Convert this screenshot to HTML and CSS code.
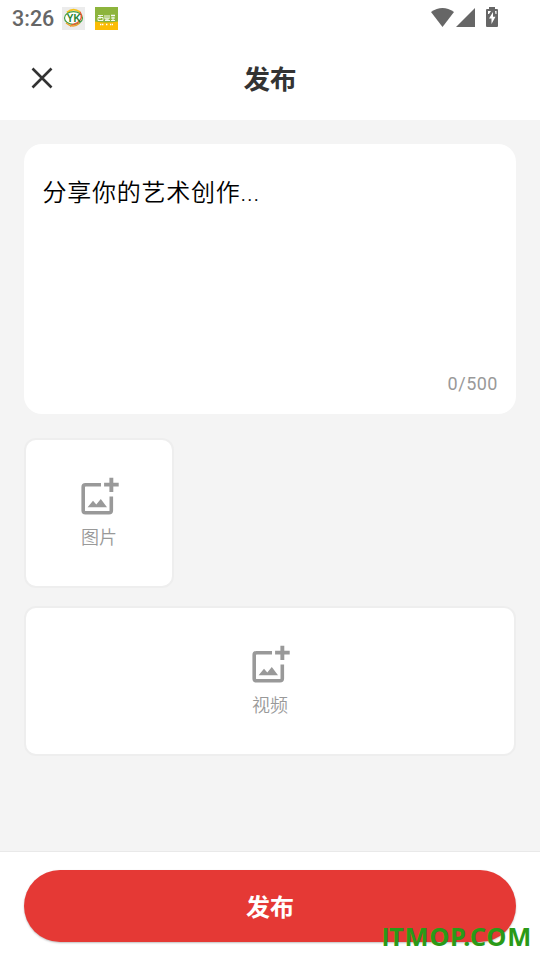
FILE: index.html
```html
<!DOCTYPE html>
<html lang="zh-CN">
<head>
<meta charset="utf-8">
<title>发布</title>
<link rel="stylesheet" href="styles.css">
</head>
<body>
<div class="screen">
  <div class="status">
    <span class="clock">3:26</span>
    <svg class="app-yk" width="23" height="23" viewBox="0 0 23 23">
      <rect width="23" height="23" fill="#ececec"/>
      <path d="M5 5.500Q11 0 18 5" fill="none" stroke="#f5c21b" stroke-width="1.8"/>
      <ellipse cx="11.500" cy="11" rx="9" ry="6.400" fill="#fff" stroke="#46a044" stroke-width="1.200"/>
      <path d="M18 5Q22 11 15 16L8 19" fill="none" stroke="#e65a32" stroke-width="1.400"/>
      <path d="M4 16Q11 22 18 16" fill="none" stroke="#eda12c" stroke-width="1.300"/>
      <text x="4.800" y="15" class="yk-text">YK</text>
    </svg>
    <svg class="app-green" width="23" height="23" viewBox="0 0 23 23">
      <rect width="23" height="23" fill="#8db43c"/>
      <path d="M0 14.500Q11 16.500 23 14.500V23H0Z" fill="#fbbc05"/>
      <path d="M3 8.500h5M3 10.500h5v3H3zM5 8v4M10 8v4h4V8M12 8v5M10 13.500h5M16 8.500h4M17 7.500v2M19 7.500v2M16 11h4M18 10v4M16 13.500h4" fill="none" stroke="#fff" stroke-width=".9"/>
      <path d="M5 17.500h4M11 17.500h2M15 17.500h3" stroke="#fff" stroke-width="1.600" stroke-dasharray="1.400 .6"/>
    </svg>
    <svg class="signals" width="68" height="22" viewBox="0 0 68 22" fill="#666">
      <path d="M0 5Q11.500 -3 23 5L11.500 20Z"/>
      <path d="M44 1V20H25Z"/>
      <path d="M58 0h6v2h2a1 1 0 0 1 1 1v16a1 1 0 0 1-1 1H56a1 1 0 0 1-1-1V3a1 1 0 0 1 1-1h2z"/>
      <path d="M62 5L58 11.500H60.500V17L64.500 9.800H62Z" fill="#fff"/>
      <path d="M57 4h3l-2 3h-1zM64 4H65.500v3h-1z" fill="#fff"/>
    </svg>
  </div>
  <header class="header">
    <svg class="close" width="24" height="24" viewBox="0 0 24 24"><path d="M2.500 2.500L21.500 21.500M21.500 2.500L2.500 21.500" stroke="#333" stroke-width="2.600"/></svg>
    <h1 class="title">发布</h1>
  </header>
  <main class="content">
    <section class="editor">
      <p class="placeholder">分享你的艺术创作...</p>
      <span class="count">0/500</span>
    </section>
    <div class="tile tile-image">
      <svg class="add-icon" width="38" height="38" viewBox="0 0 38 38"><path d="M20 7.800H4.500Q2.200 7.800 2.200 10V33.500Q2.200 35.800 4.500 35.800H28Q30.300 35.800 30.300 33.500V19.500" fill="none" stroke="#999" stroke-width="3.600"/><path d="M28.400 .7h3.900v5h5.400v3.900h-5.400v5.300h-3.900V9.600h-5.300V5.700h5.300z M6.600 30.200L12 23.800L15.300 27.600L19.800 22L26 30.200Z" fill="#999"/></svg>
      <span class="label">图片</span>
    </div>
    <div class="tile">
      <svg class="add-icon" width="38" height="38" viewBox="0 0 38 38"><path d="M20 7.800H4.500Q2.200 7.800 2.200 10V33.500Q2.200 35.800 4.500 35.800H28Q30.300 35.800 30.300 33.500V19.500" fill="none" stroke="#999" stroke-width="3.600"/><path d="M28.400 .7h3.900v5h5.400v3.900h-5.400v5.300h-3.900V9.600h-5.300V5.700h5.300z M6.600 30.200L12 23.800L15.300 27.600L19.800 22L26 30.200Z" fill="#999"/></svg>
      <span class="label">视频</span>
    </div>
  </main>
  <footer class="footer">
    <button class="submit">发布</button>
    <span class="watermark"><span class="plain">I</span>TMOP.COM</span>
  </footer>
</div>
</body>
</html>
```
FILE: styles.css
```css
* { box-sizing: border-box; }
body { margin: 0; font-family: Roboto, "Noto Sans CJK SC", sans-serif; }
.screen { width: 540px; height: 960px; display: flex; flex-direction: column; background: #f4f4f4; overflow: hidden; }
.status { height: 36px; flex: none; background: #fff; display: flex; align-items: flex-start; padding: 7px 41px 0 12px; }
.clock { width: 50px; font-size: 21.5px; line-height: 24px; font-weight: 500; color: #666; white-space: nowrap; }
.app-green { margin-left: 10px; }
.signals { margin-left: auto; }
.yk-text { font: bold 10px "Liberation Sans Narrow", "Liberation Sans", sans-serif; fill: #24842f; }
.header { height: 84px; flex: none; background: #fff; display: grid; grid-template-columns: 24px 1fr 24px; align-items: center; padding: 0 30px; }
.title { margin: 3px 0 0; text-align: center; font-size: 26.5px; line-height: 36px; font-weight: 700; color: #333; }
.content { flex: 1; padding: 24px 24px 0; }
.editor { height: 270px; border-radius: 18px; background: #fff; padding: 31px 18px 18px; display: flex; flex-direction: column; justify-content: space-between; }
.placeholder { margin: 0; font-size: 24px; line-height: 36px; font-weight: 350; letter-spacing: .75px; padding-left: .5px; color: #000; }
.count { align-self: flex-end; font-size: 18px; line-height: 24px; letter-spacing: .5px; color: #999; }
.tile { height: 150px; margin-top: 18px; border: 2px solid #eee; border-radius: 12px; background: #fff; display: flex; flex-direction: column; align-items: center; padding-top: 37px; }
.tile-image { width: 150px; margin-top: 24px; }
.add-icon { flex: none; margin-left: 1px; }
.label { margin-top: 10px; font-size: 18px; line-height: 26px; font-weight: 350; color: #999; }
.footer { position: relative; height: 109px; flex: none; background: #fff; border-top: 1px solid #e9e9e9; padding: 18px 24px; }
.submit { display: block; width: 100%; height: 72px; border: 0; border-radius: 36px; background: #e53935; color: #fff; font: 700 24px/36px Roboto, "Noto Sans CJK SC", sans-serif; padding: 3px 0 0; box-shadow: 0 1px 2px rgba(0,0,0,.25); }
.watermark { position: absolute; right: 8px; top: 66px; font: 700 25.5px/36px "Noto Sans", sans-serif; letter-spacing: .7px; color: #2a9a17; white-space: nowrap; }
.plain { font-family: "Liberation Sans", sans-serif; letter-spacing: -.1px; }
```
